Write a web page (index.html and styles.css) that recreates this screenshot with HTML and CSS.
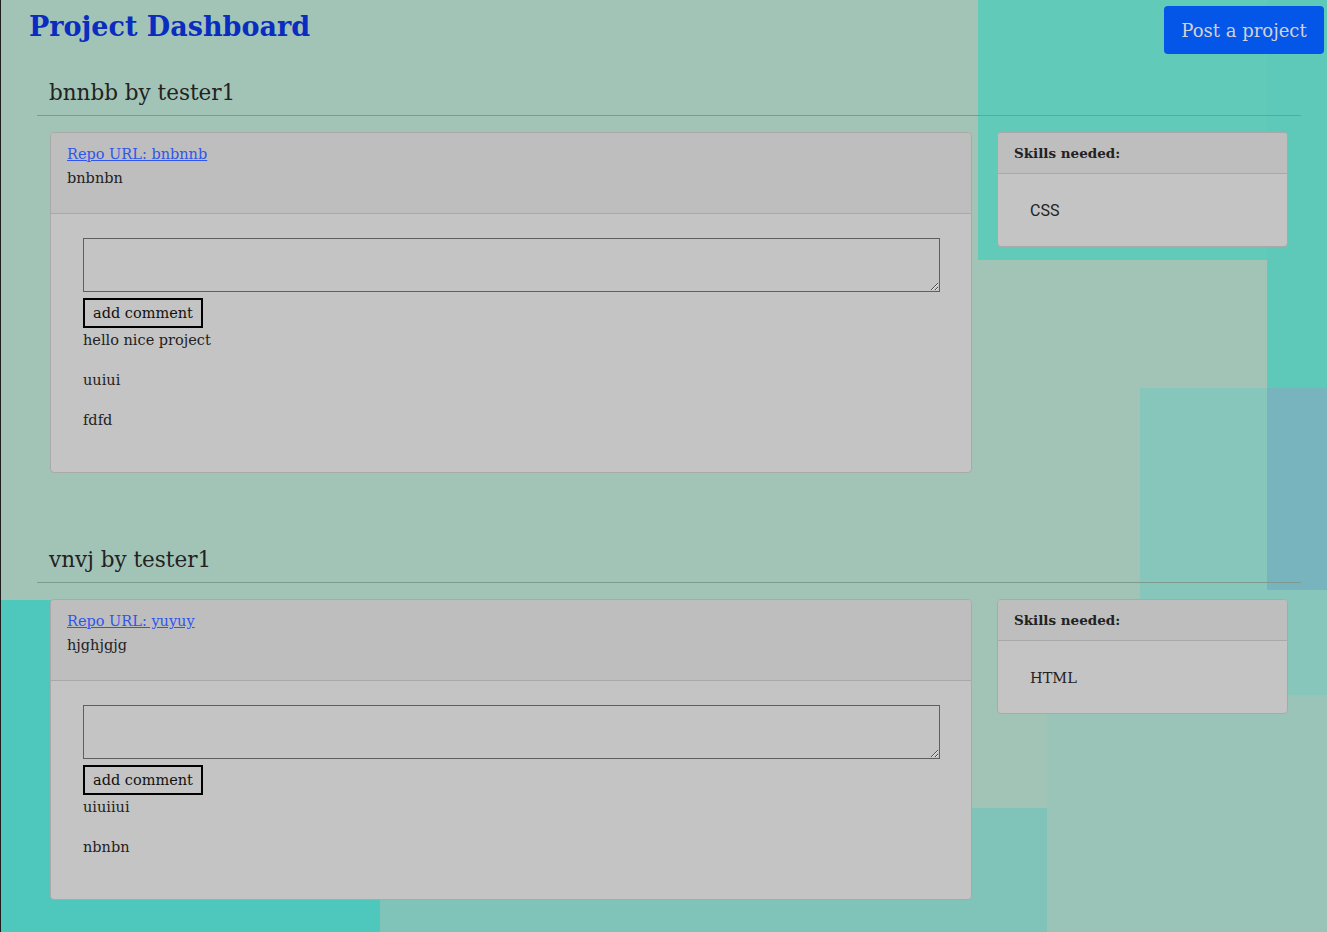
FILE: index.html
```html
<!DOCTYPE html>
<html lang="en">
<head>
<meta charset="utf-8">
<title>Project Dashboard</title>
<link rel="stylesheet" href="styles.css">
</head>
<body>
<div class="page">
  <header class="topbar">
    <h1 class="title">Project Dashboard</h1>
    <button class="post-btn">Post a project</button>
  </header>

  <section class="project">
    <h2 class="project-title">bnnbb by tester1</h2>
    <hr class="rule">
    <div class="row">
      <div class="card main-card">
        <div class="card-header">
          <a class="repo" href="#">Repo URL: bnbnnb</a>
          <p class="desc">bnbnbn</p>
        </div>
        <div class="card-body">
          <textarea class="comment-input"></textarea>
          <button class="add-btn">add comment</button>
          <p class="comment">hello nice project</p>
          <p class="comment">uuiui</p>
          <p class="comment">fdfd</p>
        </div>
      </div>
      <div class="card skills-card">
        <div class="skills-header">Skills needed:</div>
        <div class="skills-body"><span class="skill sans">CSS</span></div>
      </div>
    </div>
  </section>

  <section class="project">
    <h2 class="project-title">vnvj by tester1</h2>
    <hr class="rule">
    <div class="row">
      <div class="card main-card">
        <div class="card-header">
          <a class="repo" href="#">Repo URL: yuyuy</a>
          <p class="desc">hjghjgjg</p>
        </div>
        <div class="card-body">
          <textarea class="comment-input"></textarea>
          <button class="add-btn">add comment</button>
          <p class="comment">uiuiiui</p>
          <p class="comment">nbnbn</p>
        </div>
      </div>
      <div class="card skills-card">
        <div class="skills-header">Skills needed:</div>
        <div class="skills-body"><span class="skill">HTML</span></div>
      </div>
    </div>
  </section>
</div>
</body>
</html>
```

FILE: styles.css
```css
html, body {
  margin: 0;
  padding: 0;
}
body {
  min-height: 932px;
  font-family: "DejaVu Serif", "Liberation Serif", serif;
  font-size: 14.5px;
  color: #222;
  border-left: 1px solid #1e1e1e;
  background-color: #a2c4b7;
  background-image:
    linear-gradient(#4ec8bc, #4ec8bc),
    linear-gradient(#80c4b9, #80c4b9),
    linear-gradient(#78b4bd, #78b4bd),
    linear-gradient(#87c6ba, #87c6ba),
    linear-gradient(#5ec9b8, #5ec9b8),
    linear-gradient(#62cab9, #62cab9),
    linear-gradient(#9bc4b8, #9bc4b8);
  background-repeat: no-repeat;
  background-size:
    380px 332px,
    667px 124px,
    60px 202px,
    187px 307px,
    60px 388px,
    290px 260px,
    280px 237px;
  background-position:
    0 600px,
    380px 808px,
    1267px 388px,
    1140px 388px,
    1267px 0,
    978px 0,
    1047px 695px;
}
.page {
  padding: 0 26px 20px 36px;
}
.topbar {
  display: flex;
  justify-content: space-between;
  align-items: flex-start;
  margin-right: -23px;
  margin-left: -8px;
}
.title {
  margin: 7px 0 0 0;
  font-size: 27px;
  font-weight: bold;
  color: #0a2dbf;
  line-height: 40px;
}
.post-btn {
  margin-top: 6px;
  width: 160px;
  height: 48px;
  padding: 0;
  background: #0356e7;
  color: #d4d0d4;
  border: none;
  border-radius: 4px;
  font-family: inherit;
  font-size: 18px;
}
.project {
  margin-bottom: 71px;
}
.project:last-child {
  margin-bottom: 0;
}
.project-title {
  margin: 23px 0 0 12px;
  font-size: 21.5px;
  font-weight: normal;
  line-height: 32px;
  color: #222;
}
.rule {
  margin: 6px 0 16px 0;
  border: 0;
  border-top: 1px solid #7b9a90;
}
.row {
  display: flex;
  gap: 25px;
  padding: 0 13px 0 13px;
  align-items: flex-start;
}
.card {
  background: #c4c4c4;
  border: 1px solid #a9a9a9;
  border-radius: 4px;
  overflow: hidden;
}
.main-card {
  width: 922px;
  box-sizing: border-box;
}
.skills-card {
  width: 291px;
  box-sizing: border-box;
}
.card-header {
  background: #bebebe;
  border-bottom: 1px solid #a9a9a9;
  padding: 9px 16px 21px 16px;
  height: 50px;
}
.repo {
  display: block;
  color: #2f55ec;
  line-height: 24px;
}
.desc {
  margin: 0;
  line-height: 24px;
}
.card-body {
  padding: 24px 32px 24px 32px;
}
.comment-input {
  display: block;
  box-sizing: border-box;
  width: 857px;
  height: 54px;
  margin: 0;
  background: transparent;
  border: 1px solid #5f5f5f;
}
.add-btn {
  display: block;
  margin-top: 6px;
  height: 30px;
  padding: 0 8px;
  background: transparent;
  border: 2px solid #000;
  font-family: inherit;
  font-size: 14.5px;
  color: #111;
}
.comment {
  margin: 0 0 16px 0;
  line-height: 24px;
}
.skills-header {
  background: #bebebe;
  border-bottom: 1px solid #a9a9a9;
  padding: 8px 16px;
  line-height: 24px;
  font-size: 13.5px;
  font-weight: bold;
}
.skills-body {
  padding: 25px 32px 23px 32px;
  line-height: 24px;
}
.sans {
  font-family: Roboto, "Noto Sans", sans-serif;
  font-size: 16px;
}
```
